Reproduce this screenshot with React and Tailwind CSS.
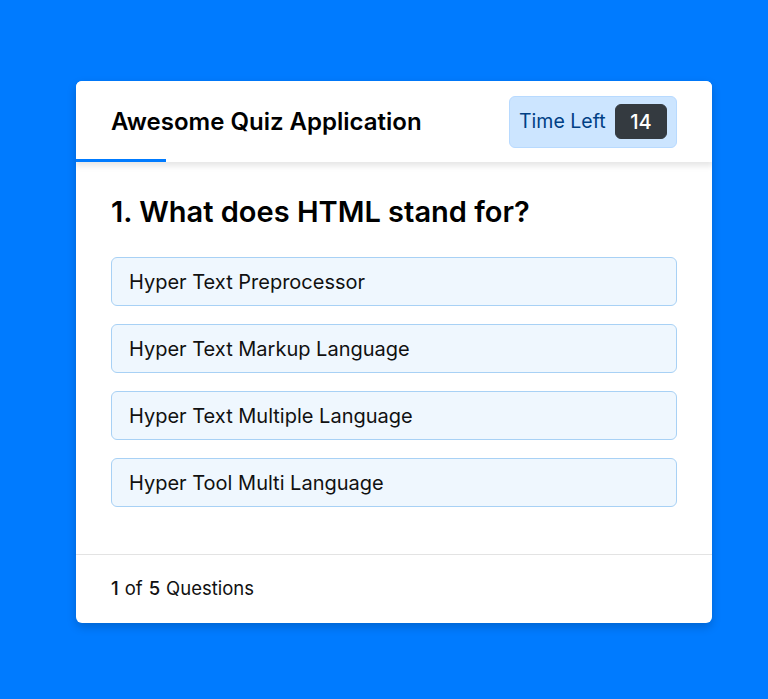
import React from 'react'

const options = [
  'Hyper Text Preprocessor',
  'Hyper Text Markup Language',
  'Hyper Text Multiple Language',
  'Hyper Tool Multi Language',
]

export default function App() {
  return (
    <div
      className="min-h-[699px] bg-[#007bff] pl-[76px] pt-[81px]"
      style={{ fontFamily: 'Inter, "Noto Sans", sans-serif' }}
    >
      <div className="w-[636px] overflow-hidden rounded-[6px] bg-white shadow-[0_4px_10px_rgba(0,0,0,0.18)]">
        <header className="relative z-10 flex h-[81px] items-center justify-between bg-white px-[35px] shadow-[0_3px_6px_1px_rgba(0,0,0,0.1)]">
          <div className="text-[24px] font-semibold text-black">Awesome Quiz Application</div>
          <div className="flex h-[52px] w-[168px] items-center justify-between rounded-[6px] border border-[#b8daff] bg-[#cce5ff] px-[9px] text-[#004085]">
            <span className="text-[19.5px] font-normal">Time Left</span>
            <span className="flex h-[35px] w-[52px] items-center justify-center rounded-[6px] border border-[#343a40] bg-[#343a40] text-[20px] font-medium text-white">
              14
            </span>
          </div>
          <div className="absolute bottom-0 left-0 h-[3px] w-[90px] bg-[#007bff]" />
        </header>

        <section className="px-[35px] pt-[28px] pb-[25px]">
          <div className="text-[29px] font-semibold leading-[44px] text-black">1. What does HTML stand for?</div>
          <div className="flex flex-col gap-[18px] pt-[23px] pb-[22px]">
            {options.map((opt) => (
              <div
                key={opt}
                className="flex h-[49px] items-center rounded-[6px] border border-[#a8d1f5] bg-[#eff7fe] px-[17px] text-[20px] text-[#111]"
              >
                {opt}
              </div>
            ))}
          </div>
        </section>

        <footer className="flex h-[69px] items-center border-t border-[#e3e3e3] px-[35px] text-[18.5px] text-[#111]">
          <span className="font-medium">1</span>
          <span className="px-[6px]">of</span>
          <span className="font-medium">5</span>
          <span className="pl-[6px]">Questions</span>
        </footer>
      </div>
    </div>
  )
}
